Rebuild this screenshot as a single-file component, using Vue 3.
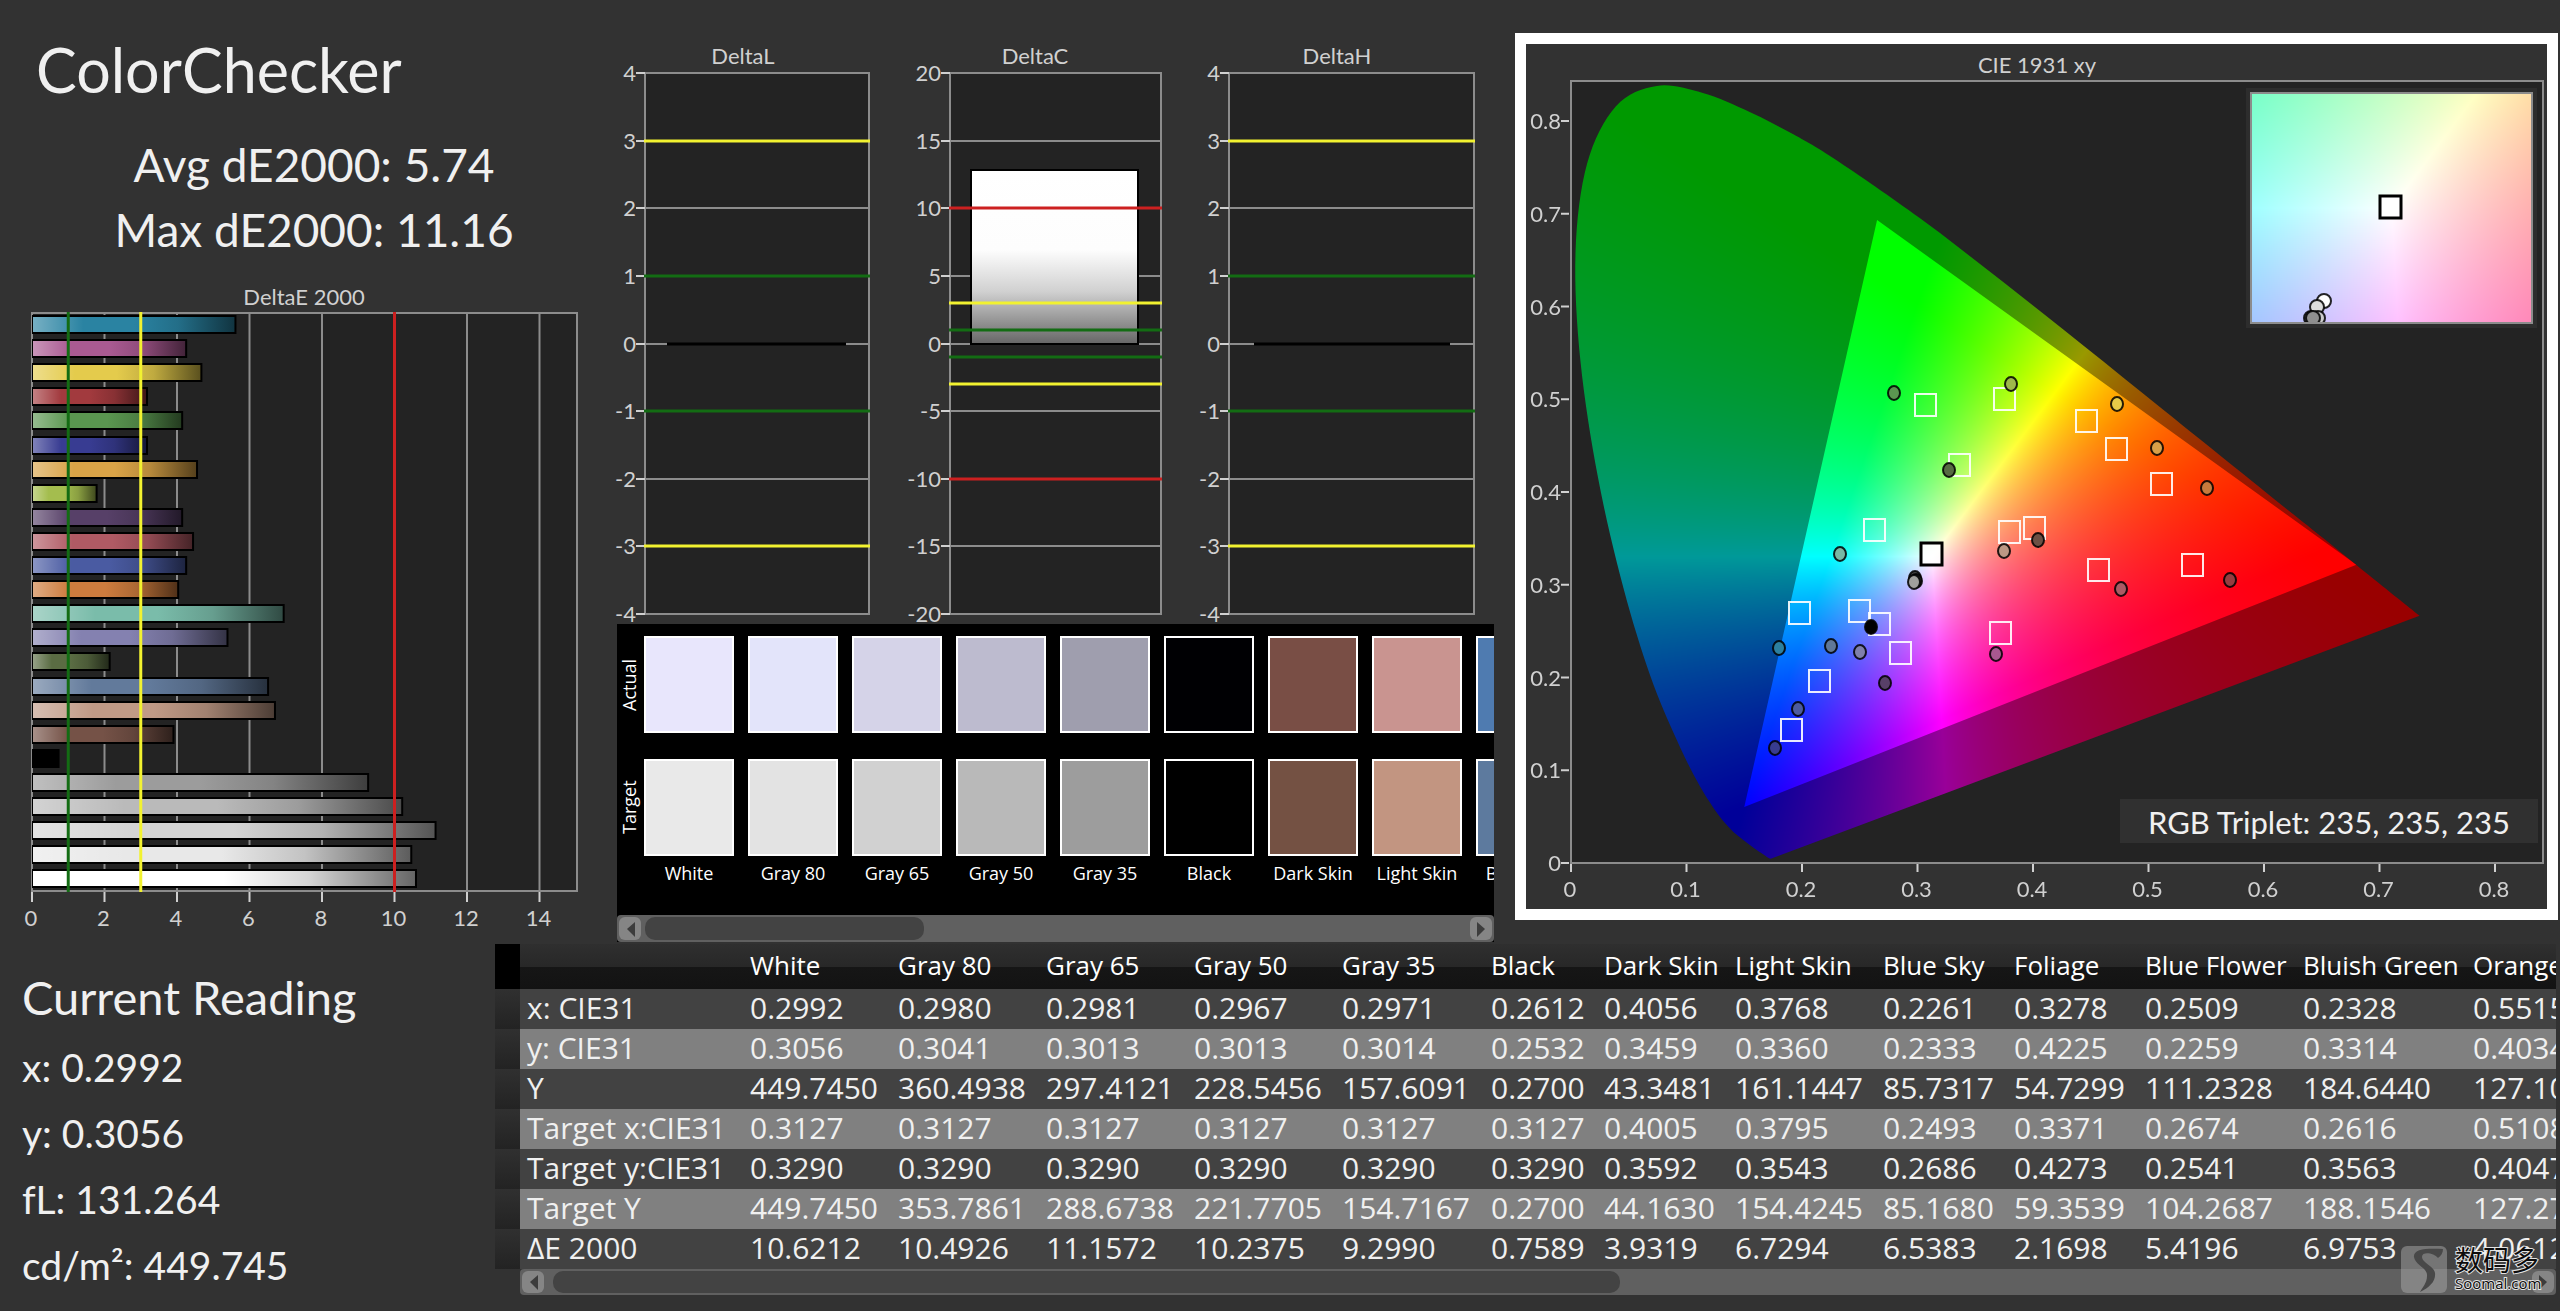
<script setup>
import { onMounted, ref } from 'vue'

const bars = [
  [5.64, '#2a83a2'], [4.28, '#aa5a92'], [4.7, '#e4cb4c'], [3.2, '#a23a3e'],
  [4.17, '#5a9650'], [3.2, '#383c92'], [4.58, '#d9a347'], [1.81, '#a4bd4e'],
  [4.17, '#574068'], [4.47, '#b05a64'], [4.28, '#4a5ba2'], [4.06, '#cd7c3e'],
  [6.97, '#7abcaa'], [5.42, '#8481b0'], [2.17, '#5a6c43'], [6.54, '#627a9b'],
  [6.73, '#c09a86'], [3.93, '#755247'], [0.76, '#000000'], [9.3, '#9c9c9c'],
  [10.24, '#bababa'], [11.16, '#d4d4d4'], [10.49, '#e8e8e8'], [10.62, '#ffffff'],
].map(([value, color], i) => ({ value, color, y: 315 + Math.round(i * 24.1) }))
const barX = (v) => 32 + v * 36.25

const deltas = [
  { title: 'DeltaL', tx: 743, left: 645, right: 869, step: 1, limits: [[3, 'y'], [1, 'g'], [-1, 'g'], [-3, 'y']], bar: [667, 846] },
  { title: 'DeltaC', tx: 1035, left: 950, right: 1161, step: 5, limits: [[10, 'r'], [3, 'y'], [1, 'g'], [-1, 'g'], [-3, 'y'], [-10, 'r']], bar: [971, 1138], value: 12.8 },
  { title: 'DeltaH', tx: 1337, left: 1229, right: 1474, step: 1, limits: [[3, 'y'], [1, 'g'], [-1, 'g'], [-3, 'y']], bar: [1254, 1450] },
]
const levels = [4, 3, 2, 1, 0, -1, -2, -3, -4]
const deltaY = (v, step) => Math.round(343.5 - (v / step) * 67.6)

const swatches = [
  ['White', '#e8e6fc', '#e9e9e9'], ['Gray 80', '#e3e4fa', '#e3e3e3'], ['Gray 65', '#d5d3e8', '#d1d1d1'],
  ['Gray 50', '#bdbbcf', '#b9b9b9'], ['Gray 35', '#9f9eae', '#9d9d9d'], ['Black', '#000003', '#000000'],
  ['Dark Skin', '#794e45', '#745143'], ['Light Skin', '#c99490', '#c29581'], ['Blue Sky', '#4f7bb0', '#5d7a9e'],
]

const columns = [
  ['White', 148, '0.2992', '0.3056', '449.7450', '0.3127', '0.3290', '449.7450', '10.6212'],
  ['Gray 80', 148, '0.2980', '0.3041', '360.4938', '0.3127', '0.3290', '353.7861', '10.4926'],
  ['Gray 65', 148, '0.2981', '0.3013', '297.4121', '0.3127', '0.3290', '288.6738', '11.1572'],
  ['Gray 50', 148, '0.2967', '0.3013', '228.5456', '0.3127', '0.3290', '221.7705', '10.2375'],
  ['Gray 35', 149, '0.2971', '0.3014', '157.6091', '0.3127', '0.3290', '154.7167', '9.2990'],
  ['Black', 113, '0.2612', '0.2532', '0.2700', '0.3127', '0.3290', '0.2700', '0.7589'],
  ['Dark Skin', 131, '0.4056', '0.3459', '43.3481', '0.4005', '0.3592', '44.1630', '3.9319'],
  ['Light Skin', 148, '0.3768', '0.3360', '161.1447', '0.3795', '0.3543', '154.4245', '6.7294'],
  ['Blue Sky', 131, '0.2261', '0.2333', '85.7317', '0.2493', '0.2686', '85.1680', '6.5383'],
  ['Foliage', 131, '0.3278', '0.4225', '54.7299', '0.3371', '0.4273', '59.3539', '2.1698'],
  ['Blue Flower', 158, '0.2509', '0.2259', '111.2328', '0.2674', '0.2541', '104.2687', '5.4196'],
  ['Bluish Green', 170, '0.2328', '0.3314', '184.6440', '0.2616', '0.3563', '188.1546', '6.9753'],
  ['Orange', 148, '0.5515', '0.4034', '127.10', '0.5108', '0.4047', '127.27', '4.0612'],
]
const rowNames = ['x: CIE31', 'y: CIE31', 'Y', 'Target x:CIE31', 'Target y:CIE31', 'Target Y', 'ΔE 2000']

const xTicks = ['0', '0.1', '0.2', '0.3', '0.4', '0.5', '0.6', '0.7', '0.8']
const targets = [
  [1925, 405], [2004, 399], [1959, 465], [2086, 421], [2116, 449], [2161, 484], [2098, 570],
  [2192, 565], [1874, 530], [2009, 532], [2034, 528], [1799, 613], [1859, 611], [1879, 624],
  [1900, 653], [2000, 633], [1819, 681], [1791, 730],
]
const readings = [
  [1894, 392, '#5a9650'], [2011, 383, '#9eb84a'], [1949, 469, '#566b42'], [2117, 403, '#e8cc48'],
  [2157, 447, '#d8a048'], [2207, 487, '#c87a3c'], [2121, 588, '#ac5a64'], [2230, 579, '#983c40'],
  [1840, 553, '#78b8a4'], [2004, 550, '#bc9884'], [2038, 539, '#6c5044'], [1915, 577, '#444'],
  [1916, 580, '#333'], [1914, 581, '#a0a09c'], [1871, 626, '#000'], [1779, 647, '#2c80a0'],
  [1831, 645, '#607898'], [1860, 651, '#8080ac'], [1885, 682, '#584068'], [1996, 653, '#a85890'],
  [1798, 708, '#4c5ca0'], [1775, 747, '#383c90'],
]
const insetReadings = [
  [2324, 301, '#ffffff'], [2317, 307, '#dddddd'], [2318, 318, '#cccccc'], [2311, 318, '#777777'], [2313, 318, '#8f8f8f'],
]

const locus = [
  [0.1741, 0.005], [0.1714, 0.0051], [0.1644, 0.0109], [0.1566, 0.0177], [0.144, 0.0297], [0.1355, 0.0399],
  [0.1241, 0.0578], [0.1096, 0.0868], [0.0913, 0.1327], [0.0687, 0.2007], [0.0454, 0.295], [0.0235, 0.4127],
  [0.0082, 0.5384], [0.0039, 0.6548], [0.0139, 0.7502], [0.0389, 0.812], [0.0743, 0.8338], [0.1142, 0.8262],
  [0.1547, 0.8059], [0.1929, 0.7816], [0.2296, 0.7543], [0.3016, 0.6923], [0.3731, 0.6245], [0.4441, 0.5547],
  [0.5125, 0.4866], [0.5752, 0.4242], [0.627, 0.3725], [0.6658, 0.334], [0.6915, 0.3083], [0.719, 0.2809],
  [0.7347, 0.2653],
]
const gamut = [[0.265, 0.69], [0.68, 0.32], [0.15, 0.06]]

const diagram = ref(null)
const inset = ref(null)

// Fills a canvas with the brightest displayable colour of each chromaticity.
function shade(canvas, x0, x1, yBottom, yTop) {
  const { width: w, height: h } = canvas
  const ctx = canvas.getContext('2d')
  const img = ctx.createImageData(w, h)
  for (let j = 0; j < h; j++) {
    const y = Math.max(yTop - ((j + 0.5) / h) * (yTop - yBottom), 0.0005)
    for (let i = 0; i < w; i++) {
      const x = x0 + ((i + 0.5) / w) * (x1 - x0)
      const X = x / y
      const Z = (1 - x - y) / y
      const r = 3.2406 * X - 1.5372 - 0.4986 * Z
      const g = -0.9689 * X + 1.8758 + 0.0415 * Z
      const b = 0.0557 * X - 0.204 + 1.057 * Z
      const k = 255 / Math.max(r, g, b)
      const o = (j * w + i) * 4
      img.data[o] = Math.max(0, r * k)
      img.data[o + 1] = Math.max(0, g * k)
      img.data[o + 2] = Math.max(0, b * k)
      img.data[o + 3] = 255
    }
  }
  ctx.putImageData(img, 0, 0)
}

onMounted(() => {
  shade(inset.value, 0.2843, 0.3411, 0.3004, 0.3576)

  const canvas = diagram.value
  const { width: w, height: h } = canvas
  const xMax = w / 1155
  const yMax = h / 932
  shade(canvas, 0, xMax, 0, yMax)
  const px = ([x, y]) => [x * 1155, h - y * 932]
  const ctx = canvas.getContext('2d')

  const outline = new Path2D()
  const pts = locus.map(px)
  outline.moveTo(...pts[0])
  for (let i = 0; i < pts.length - 1; i++) {
    const a = pts[Math.max(i - 1, 0)]
    const b = pts[i]
    const c = pts[i + 1]
    const d = pts[Math.min(i + 2, pts.length - 1)]
    outline.bezierCurveTo(
      b[0] + (c[0] - a[0]) / 6, b[1] + (c[1] - a[1]) / 6,
      c[0] - (d[0] - b[0]) / 6, c[1] - (d[1] - b[1]) / 6,
      c[0], c[1],
    )
  }
  outline.closePath()
  const dim = new Path2D()
  dim.rect(0, 0, w, h)
  gamut.forEach((p, i) => (i ? dim.lineTo(...px(p)) : dim.moveTo(...px(p))))
  dim.closePath()
  ctx.fillStyle = 'rgba(0, 0, 0, 0.4)'
  ctx.fill(dim, 'evenodd')
  ctx.globalCompositeOperation = 'destination-in'
  ctx.fillStyle = '#000'
  ctx.fill(outline)
})
</script>

<template>
  <main class="page">
    <div class="top">
      <section class="summary">
        <h1>ColorChecker</h1>
        <div class="stats">
          <p>Avg dE2000: 5.74</p>
          <p>Max dE2000: 11.16</p>
        </div>
        <svg class="chart" viewBox="0 262 600 682">
          <defs>
            <linearGradient v-for="(b, i) in bars" :id="'bar' + i" :key="i">
              <stop offset="0" :stop-color="b.color" />
              <stop offset="0.5" :stop-color="b.color" />
              <stop offset="0.72" :stop-color="b.color" stop-opacity="0.84" />
              <stop offset="1" :stop-color="b.color" stop-opacity="0.4" />
            </linearGradient>
            <linearGradient id="shine">
              <stop offset="0" stop-color="#fff" stop-opacity="0.36" />
              <stop offset="0.25" stop-color="#fff" stop-opacity="0" />
            </linearGradient>
          </defs>
          <text x="304" y="305" class="mid">DeltaE 2000</text>
          <rect x="32" y="313" width="545" height="578" class="plot" />
          <g v-for="n in [0, 2, 4, 6, 8, 10, 12, 14]" :key="n">
            <line :x1="barX(n)" y1="313" :x2="barX(n)" y2="891" class="grid" />
            <line :x1="barX(n)" y1="892" :x2="barX(n)" y2="902" class="tick" />
            <text :x="barX(n) - 1" y="926" class="mid">{{ n }}</text>
          </g>
          <g v-for="(b, i) in bars" :key="i">
            <rect x="32" :y="b.y" :width="b.value * 36.25" height="19" fill="#000" />
            <rect x="33" :y="b.y + 2" :width="b.value * 36.25 - 3" height="15" :fill="`url(#bar${i})`" />
            <rect v-if="b.value > 1" x="33" :y="b.y + 2" :width="b.value * 36.25 - 3" height="15" fill="url(#shine)" />
          </g>
          <line :x1="barX(1)" y1="312" :x2="barX(1)" y2="892" class="g" />
          <line :x1="barX(3)" y1="312" :x2="barX(3)" y2="892" class="y" />
          <line :x1="barX(10)" y1="312" :x2="barX(10)" y2="892" class="r" />
        </svg>
      </section>

      <section class="middle">
        <svg class="chart" viewBox="600 0 915 624">
          <defs>
            <linearGradient id="chroma" x2="0" y2="1">
              <stop offset="0" stop-color="#fff" />
              <stop offset="0.46" stop-color="#fdfdfd" />
              <stop offset="0.7" stop-color="#d0d0d0" />
              <stop offset="1" stop-color="#666" />
            </linearGradient>
          </defs>
          <g v-for="d in deltas" :key="d.title">
            <text :x="d.tx" y="64" class="mid">{{ d.title }}</text>
            <rect :x="d.left" y="73" :width="d.right - d.left" height="541" class="plot" />
            <g v-for="n in levels" :key="n">
              <line :x1="d.left" :y1="deltaY(n, 1)" :x2="d.right" :y2="deltaY(n, 1)" class="grid" />
              <line :x1="d.left - 9" :y1="deltaY(n, 1)" :x2="d.left" :y2="deltaY(n, 1)" class="tick" />
              <text :x="d.left - 9" :y="deltaY(n, 1) + 8" class="end">{{ n * d.step }}</text>
            </g>
            <rect
              v-if="d.value" :x="d.bar[0]" :y="deltaY(d.value, d.step)" :width="d.bar[1] - d.bar[0]"
              :height="344 - deltaY(d.value, d.step)" fill="url(#chroma)" stroke="#000" stroke-width="2"
            />
            <line v-else :x1="d.bar[0]" y1="344" :x2="d.bar[1]" y2="344" class="flat" />
            <line
              v-for="[v, c] in d.limits" :key="v" :x1="d.left - 1" :y1="deltaY(v, d.step)"
              :x2="d.right + 1" :y2="deltaY(v, d.step)" :class="c"
            />
          </g>
        </svg>
        <div class="compare">
          <div class="patches">
            <div class="side"><span>Actual</span><span>Target</span></div>
            <div v-for="[name, actual, target] in swatches" :key="name" class="patch">
              <i :style="{ background: actual }"></i>
              <i :style="{ background: target }"></i>
              <span>{{ name }}</span>
            </div>
          </div>
          <div class="scroll">
            <button type="button" aria-label="Scroll left"><svg viewBox="0 0 22 22"><path d="M16 4v15L8 11z" /></svg></button>
            <div class="track"><div class="thumb short"></div></div>
            <button type="button" aria-label="Scroll right"><svg viewBox="0 0 22 22"><path d="M7 4v15l8-8z" /></svg></button>
          </div>
        </div>
      </section>

      <section class="cie">
        <svg class="chart" viewBox="1526 44 1021 865">
          <text x="2037" y="73" class="mid">CIE 1931 xy</text>
          <rect x="1571" y="81" width="972" height="782" class="plot" />
          <foreignObject x="1571" y="83" width="970" height="780">
            <canvas ref="diagram" width="970" height="780"></canvas>
          </foreignObject>
          <rect x="1571" y="81" width="972" height="782" class="frame" />
          <g v-for="(t, i) in xTicks" :key="t">
            <line :x1="1571 + i * 115.5" y1="864" :x2="1571 + i * 115.5" y2="872" class="tick" />
            <text :x="1570 + i * 115.5" y="897" class="mid">{{ t }}</text>
            <line x1="1561" :y1="863 - i * 92.75" x2="1569" :y2="863 - i * 92.75" class="tick" />
            <text x="1561" :y="871 - i * 92.75" class="end">{{ t }}</text>
          </g>
          <rect v-for="([x, y], i) in targets" :key="i" :x="x - 10" :y="y - 11" width="21" height="22" class="target" />
          <rect x="1921" y="543" width="21" height="22" class="white" />
          <ellipse v-for="([x, y, c], i) in readings" :key="i" :cx="x" :cy="y + 1" rx="6" ry="7" :fill="c" class="reading" />

          <rect x="2246" y="88" width="291" height="240" fill="#2d2d2d" />
          <foreignObject x="2251" y="93" width="281" height="230">
            <canvas ref="inset" width="281" height="230"></canvas>
          </foreignObject>
          <clipPath id="insetClip"><rect x="2251" y="93" width="281" height="230" /></clipPath>
          <g clip-path="url(#insetClip)">
            <circle v-for="([x, y, c], i) in insetReadings" :key="i" :cx="x" :cy="y" r="7" :fill="c" class="reading" />
          </g>
          <rect x="2251" y="93" width="281" height="230" class="frame" />
          <rect x="2380" y="196" width="21" height="22" class="white" />

          <rect x="2120" y="799" width="418" height="44" fill="#303030" />
          <text x="2329" y="834" class="mid triplet">RGB Triplet: 235, 235, 235</text>
        </svg>
      </section>
    </div>

    <div class="bottom">
      <section class="current">
        <h2>Current Reading</h2>
        <p>x: 0.2992</p>
        <p>y: 0.3056</p>
        <p>fL: 131.264</p>
        <p>cd/m²: 449.745</p>
      </section>
      <section class="data">
        <div class="clip">
          <table>
            <colgroup>
              <col class="c-grip" />
              <col class="c-name" />
              <col v-for="c in columns" :key="c[0]" :style="{ width: c[1] + 'px' }" />
            </colgroup>
            <thead>
              <tr>
                <td class="corner"></td>
                <td></td>
                <th v-for="c in columns" :key="c[0]" scope="col">{{ c[0] }}</th>
              </tr>
            </thead>
            <tbody>
              <tr v-for="(name, r) in rowNames" :key="name">
                <td class="grip"></td>
                <th scope="row">{{ name }}</th>
                <td v-for="c in columns" :key="c[0]">{{ c[r + 2] }}</td>
              </tr>
            </tbody>
          </table>
        </div>
        <div class="scroll wide">
          <button type="button" aria-label="Scroll table left"><svg viewBox="0 0 22 22"><path d="M16 4v15L8 11z" /></svg></button>
          <div class="track"><div class="thumb long"></div></div>
          <button type="button" aria-label="Scroll table right"><svg viewBox="0 0 22 22"><path d="M7 4v15l8-8z" /></svg></button>
        </div>
        <svg class="mark" viewBox="0 0 144 52">
          <rect x="1" y="2" width="46" height="47" rx="6" fill="#a8a8a8" fill-opacity="0.5" />
          <path d="M43 5C26 4 13 5 14 13C15 21 28 24 27 32C27 39 22 44 20 48C30 43 36 37 35 29C34 22 22 19 22 13C22 7 34 9 38 14C41 12 43 9 43 5z" fill="#484848" />
          <text x="55" y="27" class="cn">数码多</text>
          <text x="55" y="45" class="site">Soomal.com</text>
        </svg>
      </section>
    </div>
  </main>
</template>

<style>
body {
  margin: 0;
  background: #323232;
}
</style>

<style scoped>
.page {
  position: relative;
  font-family: Lato, "Liberation Sans", sans-serif;
  color: #f0f0f0;
  background: #323232;
}
h1, h2, p {
  margin: 0;
  font-weight: 400;
}
.top {
  display: grid;
  grid-template-columns: minmax(0, 600fr) minmax(0, 915fr) minmax(0, 1045fr);
}
.chart {
  display: block;
  width: 100%;
  font-size: 22px;
  fill: #d0d0d0;
}
.chart canvas {
  display: block;
}
h1 {
  padding: 34px 0 26px 36px;
  font-size: 61px;
  line-height: 72px;
}
.stats {
  padding-left: 28px;
  font-size: 46px;
  line-height: 65px;
  text-align: center;
}
.mid { text-anchor: middle; }
.end { text-anchor: end; }
.triplet {
  font-size: 31px;
  fill: #f0f0f0;
}
.plot {
  fill: #232323;
  stroke: #8c8c8c;
  stroke-width: 2;
}
.frame {
  fill: none;
  stroke: #8c8c8c;
  stroke-width: 2;
}
.grid { stroke: #8c8c8c; stroke-width: 2; }
.tick { stroke: #d0d0d0; stroke-width: 2; }
.flat { stroke: #000; stroke-width: 3; }
.g { stroke: #136c13; stroke-width: 3; }
.y { stroke: #f2f230; stroke-width: 3; }
.r { stroke: #cc2020; stroke-width: 3; }
.target { fill: none; stroke: #fff; stroke-opacity: 0.9; stroke-width: 2; }
.white { stroke: #000; stroke-width: 3; fill: #fff; fill-opacity: 0.85; }
.reading { stroke: #000; stroke-opacity: 0.85; stroke-width: 2; }

.compare {
  margin: 0 21px 0 17px;
  background: #000;
  color: #fff;
  font: 18px/24px "Open Sans", "Noto Sans", sans-serif;
}
.patches {
  display: flex;
  gap: 14px;
  padding: 12px 0 30px;
  overflow: hidden;
}
.side {
  flex: none;
  display: flex;
  flex-direction: column;
  gap: 26px;
  width: 27px;
  margin-right: -14px;
}
.side span {
  height: 97px;
  writing-mode: vertical-rl;
  transform: rotate(180deg);
  text-align: center;
}
.patch {
  flex: none;
  width: 90px;
  text-align: center;
  white-space: nowrap;
}
.patch i {
  display: block;
  box-sizing: border-box;
  height: 97px;
  border: 2px solid #fff;
}
.patch i + i {
  margin: 26px 0 5px;
}
.scroll {
  display: flex;
  gap: 4px;
  box-sizing: border-box;
  height: 27px;
  padding: 2px;
  border-radius: 4px;
  background: #606060;
}
.scroll button {
  flex: none;
  width: 22px;
  padding: 0;
  border: 0;
  border-radius: 6px;
  background: #858585;
}
.scroll button svg {
  display: block;
  width: 22px;
  height: 22px;
  fill: #3c3c3c;
}
.track {
  flex: 1;
}
.thumb {
  height: 100%;
  border-radius: 10px;
  background: #434343;
}
.short { width: 34%; }
.long { width: 54%; }

.cie {
  margin: 33px 2px 24px 0;
  border: 11px solid #fff;
  align-self: start;
}

.bottom {
  display: grid;
  grid-template-columns: 495px minmax(0, 1fr);
}
.current {
  padding: 25px 0 0 22px;
  font-size: 39px;
  line-height: 66px;
}
h2 {
  margin-bottom: 9px;
  font-size: 47px;
  line-height: 56px;
}
.data {
  position: relative;
  margin-right: 4px;
}
.clip {
  overflow: hidden;
}
table {
  table-layout: fixed;
  width: 0;
  border-collapse: collapse;
  font: 30px/36px "Open Sans", "Noto Sans", sans-serif;
  white-space: nowrap;
}
.c-grip { width: 25px; }
.c-name { width: 223px; }
th, td {
  height: 37px;
  padding: 0 0 3px 7px;
  font-weight: 400;
  text-align: left;
}
thead tr {
  background: linear-gradient(#2f2f2f, #282828 50%, #161616 51%, #131313);
}
thead th, thead td {
  height: 43px;
  padding-bottom: 2px;
  font-size: 26px;
  line-height: 43px;
  color: #fff;
}
thead .corner {
  background: #000;
}
tbody tr { background: #424242; }
tbody tr:nth-child(even) { background: #808080; }
tbody .grip {
  padding: 0;
  background: linear-gradient(#303030, #232323);
}
.wide {
  height: 26px;
  margin-left: 25px;
}
.wide .track { padding-left: 5px; }
.mark {
  position: absolute;
  right: 12px;
  bottom: 2px;
  width: 144px;
}
.cn, .site {
  fill: #0c0c0c;
  stroke: #e4e4e4;
  stroke-width: 2;
  paint-order: stroke;
}
.cn { font: 28px "Noto Sans CJK SC", sans-serif; }
.site { font: 15px "Open Sans", sans-serif; }
</style>
